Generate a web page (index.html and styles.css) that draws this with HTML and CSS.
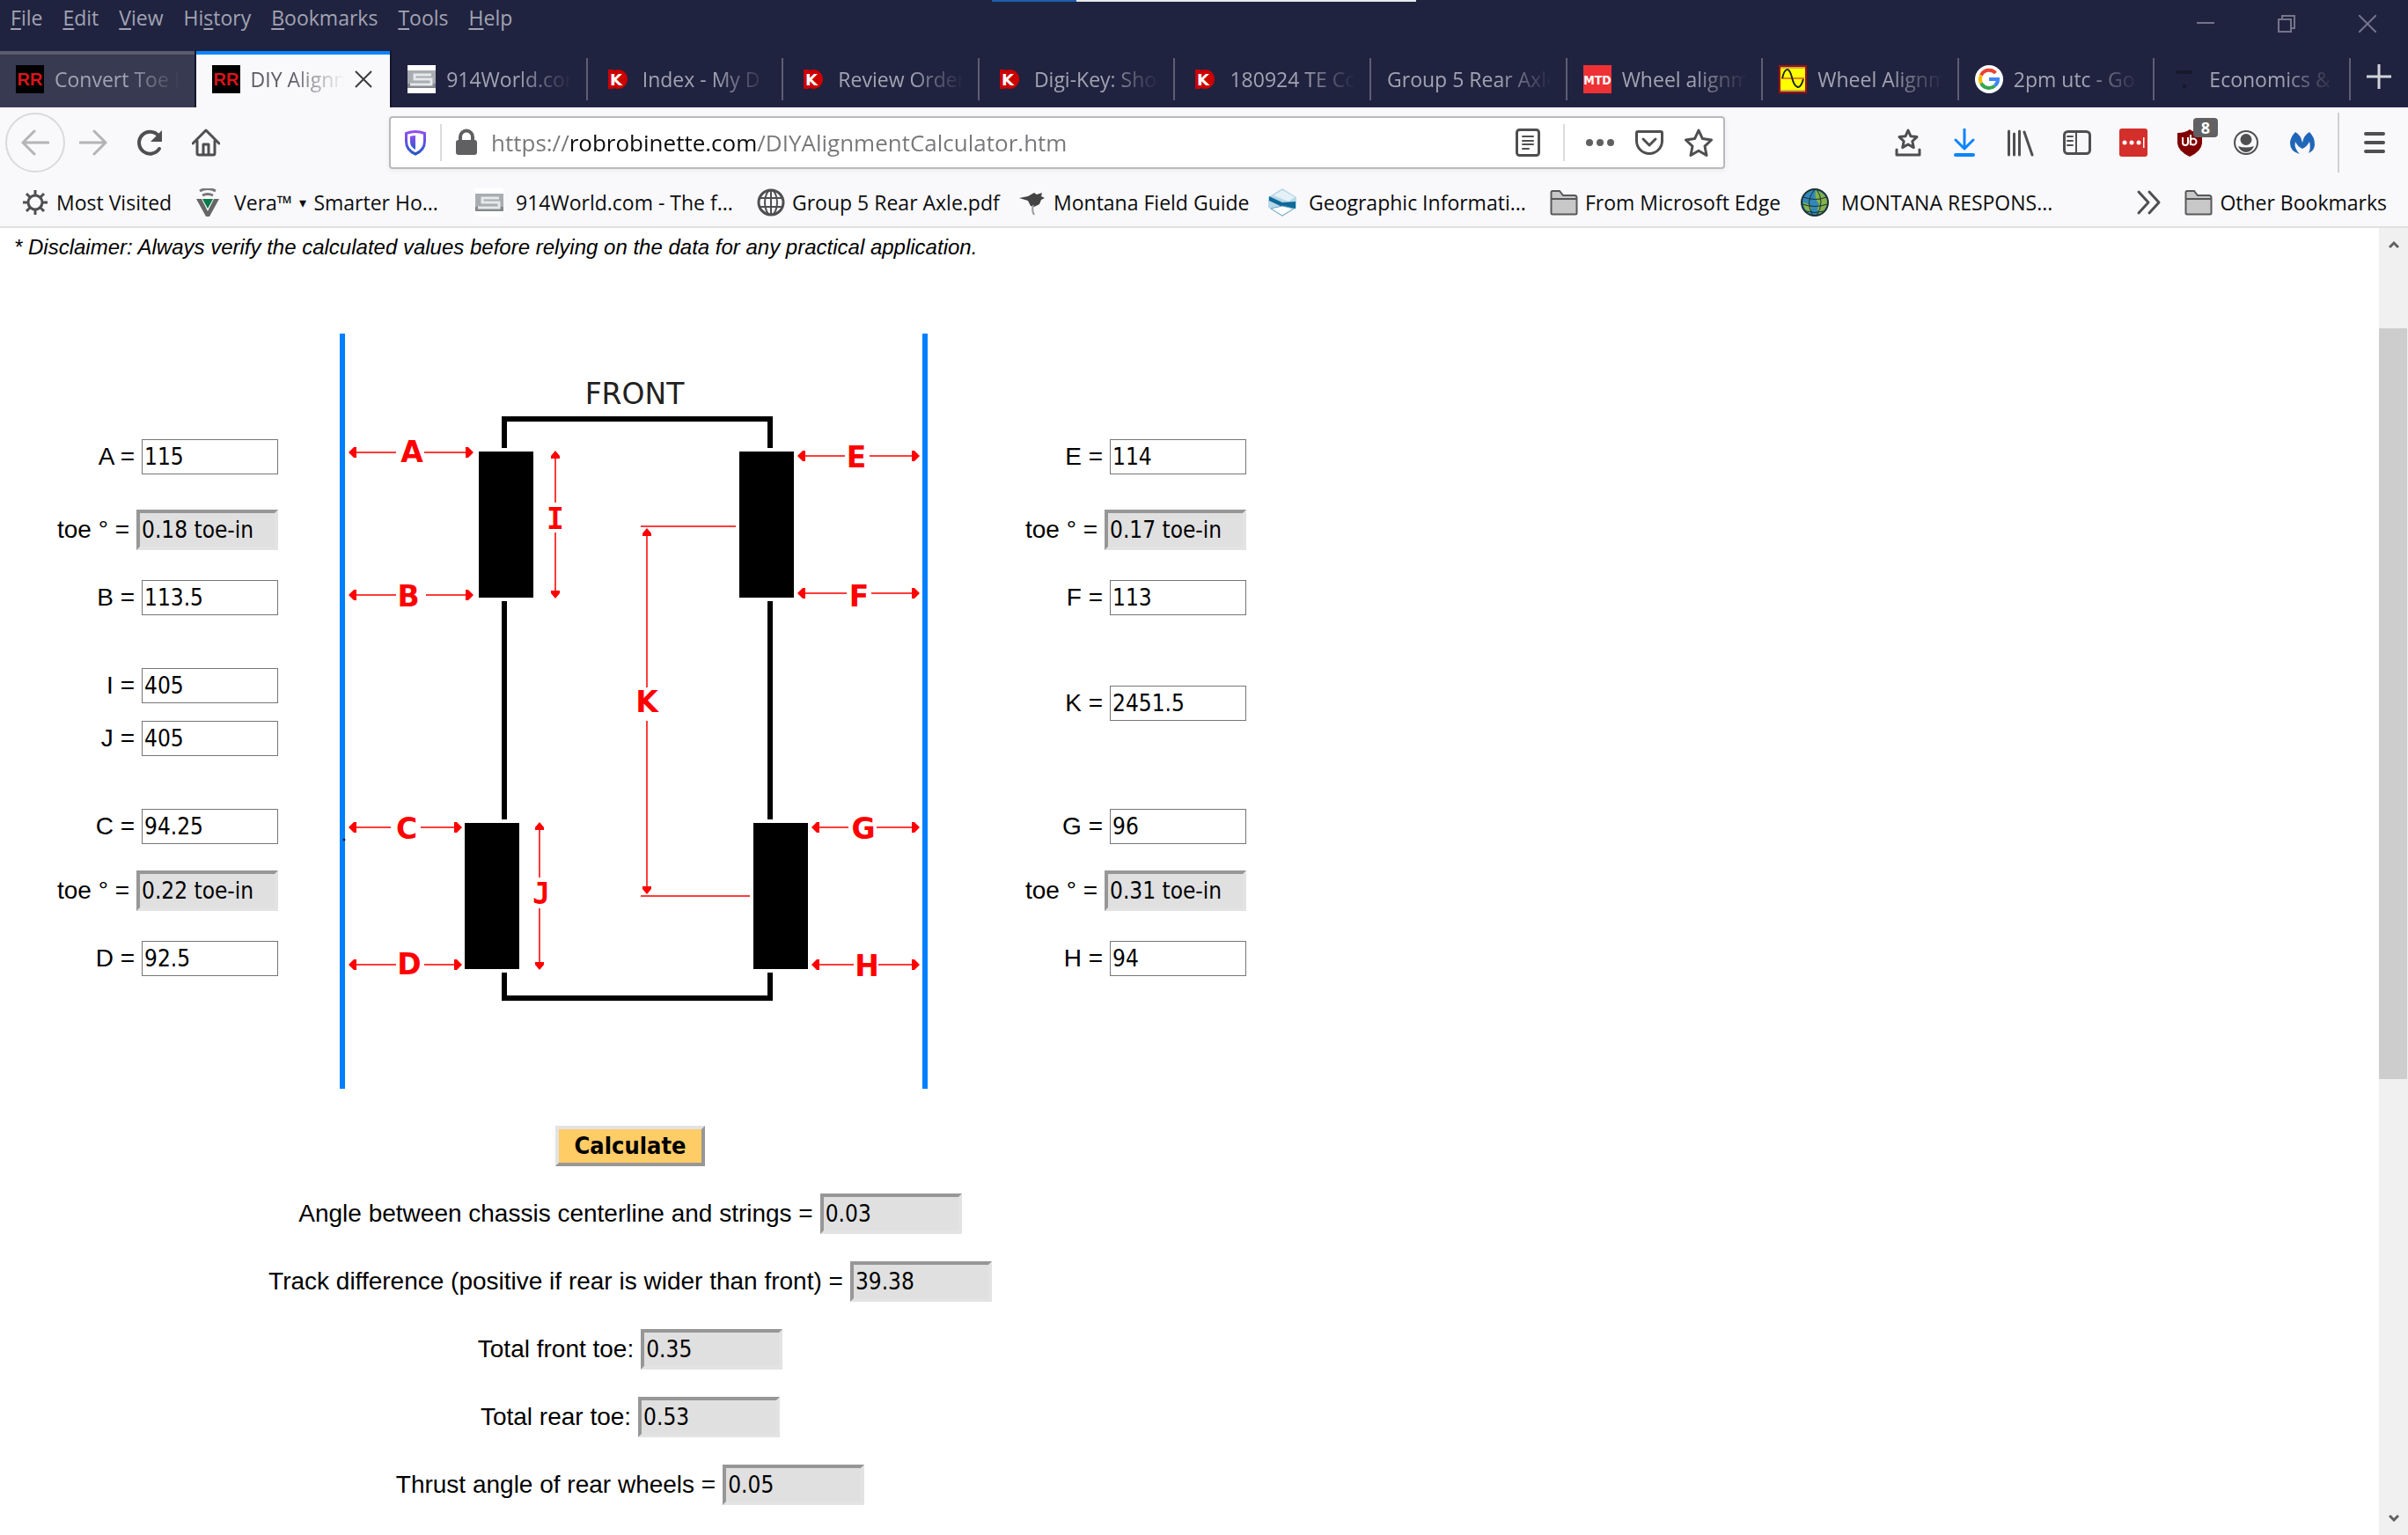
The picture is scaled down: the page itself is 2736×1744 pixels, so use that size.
FILE: index.html
```
<!DOCTYPE html>
<html lang="en">
<head>
  <meta charset="UTF-8">
  <meta name="viewport" content="width=device-width, initial-scale=1.0">
  <title>DIY Alignment Calculator</title>
  <link rel="stylesheet" href="styles.css">
</head>
<body>
  <svg class="defs" aria-hidden="true">
    <symbol id="rr" viewBox="0 0 32 32">
      <rect width="32" height="32" fill="#000"/>
      <text x="16" y="23" text-anchor="middle" font-family="Liberation Sans" font-weight="bold" font-size="20" fill="#d8141c">RR</text>
    </symbol>
    <symbol id="nine" viewBox="0 0 32 32">
      <rect width="32" height="32" fill="#fff"/>
      <path d="M0 6h32v20H0z" fill="#a9acb0"/>
      <path d="M0 21h32v5H0z" fill="#85888c"/>
      <path d="M27 11H8v5h19v6H3" fill="none" stroke="#e6e8ea" stroke-width="3"/>
    </symbol>
    <symbol id="dk" viewBox="0 0 32 32">
      <circle cx="16" cy="16" r="11" fill="#c00"/>
      <path d="M5 5h6v22H5z" fill="#c00"/>
      <text x="14" y="23" text-anchor="middle" font-family="DejaVu Sans" font-weight="bold" font-size="18" fill="#fff">K</text>
    </symbol>
    <symbol id="folder" viewBox="0 0 32 32">
      <path d="M1.500 28V4.500q0-1.500 1.500-1.500h8l4 5h13q2.500 0 2.500 2.500V28q0 1.500-1.500 1.500H3q-1.500 0-1.500-1.500z" fill="#c8c8c9" stroke="#58585a" stroke-width="2"/>
      <path d="M2 12h28" stroke="#58585a" stroke-width="2"/>
    </symbol>
    <symbol id="arrow" viewBox="0 0 9 12"><path d="M0 6l2-2 4-4h3v12H6L2 8z"/></symbol>
  </svg>

  <header class="browser">
    <div class="progress"></div>
    <div class="titlebar">
      <nav class="menu">
        <a href="#"><u>F</u>ile</a>
        <a href="#"><u>E</u>dit</a>
        <a href="#"><u>V</u>iew</a>
        <a href="#">Hi<u>s</u>tory</a>
        <a href="#"><u>B</u>ookmarks</a>
        <a href="#"><u>T</u>ools</a>
        <a href="#"><u>H</u>elp</a>
      </nav>
      <div class="window-controls">
        <button aria-label="Minimize"><svg viewBox="0 0 20 20"><path d="M0 9h20"/></svg></button>
        <button aria-label="Restore"><svg viewBox="0 0 20 20"><path d="M1 5h14v14H1zM5 5V1h14v14h-4"/></svg></button>
        <button aria-label="Close window"><svg viewBox="0 0 20 20"><path d="M0 0l20 20M20 0L0 20"/></svg></button>
      </div>
    </div>

    <div class="tabs">
      <div class="tab hover"><svg class="icon"><use href="#rr"/></svg><span>Convert Toe D</span></div>
      <div class="tab active"><svg class="icon"><use href="#rr"/></svg><span>DIY Alignm</span>
        <button class="close" aria-label="Close tab"><svg viewBox="0 0 20 20"><path d="M1 1l18 18M19 1L1 19"/></svg></button>
      </div>
      <div class="tab"><svg class="icon"><use href="#nine"/></svg><span>914World.com</span></div>
      <div class="tab"><svg class="icon"><use href="#dk"/></svg><span>Index - My D</span></div>
      <div class="tab"><svg class="icon"><use href="#dk"/></svg><span>Review Order</span></div>
      <div class="tab"><svg class="icon"><use href="#dk"/></svg><span>Digi-Key: Sho</span></div>
      <div class="tab"><svg class="icon"><use href="#dk"/></svg><span>180924 TE Co</span></div>
      <div class="tab"><span>Group 5 Rear Axle</span></div>
      <div class="tab">
        <svg class="icon" viewBox="0 0 32 32"><rect width="32" height="32" fill="#ee3135"/><text x="16" y="22" text-anchor="middle" font-family="DejaVu Sans Condensed" font-weight="bold" font-size="14" fill="#fff">MTD</text></svg>
        <span>Wheel alignm</span>
      </div>
      <div class="tab">
        <svg class="icon" viewBox="0 0 32 32"><rect x="1" y="1" width="30" height="30" fill="#ff0" stroke="#a01010" stroke-width="2"/><path d="M2 3h28M2 29h28" stroke="#c8b040" stroke-width="2"/><path d="M3 15h26" stroke="#e08020" stroke-width="2"/><path d="M4 15C7 2 12 2 15 14s9 16 13 2" fill="none" stroke="#222" stroke-width="2"/></svg>
        <span>Wheel Alignm</span>
      </div>
      <div class="tab">
        <svg class="icon" viewBox="0 0 32 32"><circle cx="16" cy="16" r="16" fill="#fff"/><g fill="none" stroke-width="4"><path d="M23.500 9A10 10 0 0 0 7 11.500" stroke="#ea4335"/><path d="M7 11.500a10 10 0 0 0 0 9" stroke="#fbbc05"/><path d="M7 20.500a10 10 0 0 0 15.500 3" stroke="#34a853"/><path d="M22.500 23.500A9.500 9.500 0 0 0 26 16h-10" stroke="#4285f4"/></g></svg>
        <span>2pm utc - Go</span>
      </div>
      <div class="tab">
        <svg class="icon" viewBox="0 0 32 32"><path d="M7 6h18v4H7zM14 22h4v4h-4z" fill="#16192e"/></svg>
        <span>Economics &amp;</span>
      </div>
      <button class="new-tab" aria-label="New tab"><svg viewBox="0 0 28 28"><path d="M14 0v28M0 14h28"/></svg></button>
    </div>

    <div class="toolbar">
      <button class="back" aria-label="Back"><svg class="icon line" viewBox="0 0 32 32"><path d="M31 16H2M15 3L2 16l13 13"/></svg></button>
      <button class="tool dim" aria-label="Forward"><svg class="icon line" viewBox="0 0 32 32"><path d="M1 16h29M17 3l13 13-13 13"/></svg></button>
      <button class="tool" aria-label="Reload"><svg class="icon line thick" viewBox="0 0 32 32"><path d="M27 23a12.500 12.500 0 1 1-1-15"/><path d="M30 2v13H17z" fill="#4f4f52" stroke="none"/></svg></button>
      <button class="tool" aria-label="Home"><svg class="icon line" viewBox="0 0 32 32"><path d="M1 17L16 2l15 15M6 14v14q0 2 2 2h16q2 0 2-2V14"/><path d="M13 29V18h6v11" /></svg></button>

      <div class="urlbar">
        <svg class="icon" viewBox="0 0 32 32"><defs><linearGradient id="shield" x2="0" y2="1"><stop offset="0" stop-color="#8f4ff0"/><stop offset="1" stop-color="#2758c8"/></linearGradient></defs><path d="M16 3.500q5 0 10.500 2v9q0 10-10.500 14.500Q5.500 24.500 5.500 14.500v-9q5.500-2 10.500-2z" fill="none" stroke="url(#shield)" stroke-width="3"/><path d="M16 8q-3 0-6 1v6q0 6 6 9z" fill="url(#shield)"/></svg>
        <i class="divider"></i>
        <svg class="icon" viewBox="0 0 32 32"><rect x="4" y="13" width="24" height="17" rx="3" fill="#606062"/><path d="M9 14V9.500a7 7 0 0 1 14 0V14" fill="none" stroke="#606062" stroke-width="4"/></svg>
        <input class="url" type="text" aria-label="Address" value="https://robrobinette.com/DIYAlignmentCalculator.htm">
        <svg class="icon line" viewBox="0 0 32 32"><rect x="3.500" y="1.500" width="25" height="29" rx="3"/><path d="M10 9h12M10 14h12M10 18h12M10 23h7" stroke-width="2"/></svg>
        <i class="divider wide"></i>
        <svg class="icon" viewBox="0 0 32 32" fill="#606062"><circle cx="4" cy="16" r="4"/><circle cx="16" cy="16" r="4"/><circle cx="28" cy="16" r="4"/></svg>
        <svg class="icon line" viewBox="0 0 32 32"><path d="M3 3.500h26q1.500 0 1.500 1.500v9a14.500 14.500 0 0 1-29 0V5q0-1.500 1.500-1.500z"/><path d="M9 12l7 7 7-7"/></svg>
        <svg class="icon line" viewBox="0 0 32 32"><path d="M16 2l4.400 9.600L30.500 13l-7.500 7.200 2 10.300-9-5.200-9 5.200 2-10.300L1.500 13l10.100-1.400z"/></svg>
      </div>

      <button class="tool" aria-label="Bookmark tools"><svg class="icon line" viewBox="0 0 32 32"><path d="M16 2l3 6.800 7 .8-5.200 4.900 1.500 7.100L16 18l-6.300 3.600 1.500-7.100L6 9.600l7-.8zM3 24v6h26v-6"/></svg></button>
      <button class="tool download" aria-label="Downloads"><svg class="icon line" viewBox="0 0 32 32"><path d="M16 1v21M6 13l10 10 10-10"/><path d="M6 30h20" stroke-width="4"/></svg></button>
      <button class="tool" aria-label="Library"><svg class="icon line" viewBox="0 0 32 32"><path d="M2.500 3v27M8.500 6v24M14.500 3v27M20 4l9 26"/></svg></button>
      <button class="tool" aria-label="Sidebar"><svg class="icon line" viewBox="0 0 32 32"><rect x="1.500" y="3.500" width="29" height="25" rx="4"/><path d="M15 4v24M5 9h6M5 14h6M5 19h6" stroke-width="2"/></svg></button>
      <button class="tool" aria-label="Passwords"><svg class="icon" viewBox="0 0 32 32"><rect width="32" height="32" rx="3" fill="#d32f2b"/><g fill="#fff"><circle cx="6" cy="16" r="2.500"/><circle cx="14" cy="16" r="2.500"/><circle cx="22" cy="16" r="2.500"/><path d="M27 10h1.500v12H27z"/></g></svg></button>
      <button class="tool" aria-label="Content blocker"><svg class="icon" viewBox="0 0 32 32"><path d="M16 1q5 4 14 4v12q-1 9-14 15Q3 26 2 17V5q9 0 14-4z" fill="#800000"/><path d="M8 10v6a3 3 0 0 0 6 0v-6M17 7v12" fill="none" stroke="#fff" stroke-width="2"/><circle cx="20" cy="15" r="3.500" fill="none" stroke="#fff" stroke-width="2"/></svg><span class="badge">8</span></button>
      <button class="tool" aria-label="Account"><svg class="icon line" viewBox="0 0 32 32"><circle cx="16" cy="16" r="13" stroke-width="2"/><g fill="#4f4f52" stroke="none"><circle cx="16" cy="12.500" r="6.500"/><path d="M7 20q9 3 18 0-3 7-9 7t-9-7z"/></g></svg></button>
      <button class="tool" aria-label="Browser guard"><svg class="icon" viewBox="0 0 32 32"><path d="M8 4q6 3 8 12Q18 7 24 4q6 6 6 14 0 7-7 10 3-6 1-13-3 6-8 8-5-2-8-8-2 7 5 14-11-3-11-12Q2 10 8 4z" fill="#2066b8"/></svg></button>
      <i class="toolbar-divider"></i>
      <button class="tool" aria-label="Menu"><svg class="icon line thick" viewBox="0 0 32 32"><path d="M6 6h20M6 16h20M6 26h20"/></svg></button>
    </div>

    <div class="bookmarks">
      <a href="#"><svg class="icon" viewBox="0 0 32 32" fill="none" stroke="#4f4f52"><circle cx="16" cy="16" r="8" stroke-width="3"/><path d="M16 2v6M16 24v6M2 16h6M24 16h6M6 6l4 4M22 22l4 4M6 26l4-4M22 10l4-4" stroke-width="3"/></svg>Most Visited</a>
      <a href="#" class="site"><svg class="icon" viewBox="0 0 32 32"><path d="M7 3q9-5 18 0M10 8q6-3 12 0" fill="none" stroke="#777" stroke-width="3"/><path d="M3 12h6l7 14 7-14h6L18 32h-4z" fill="#666"/><path d="M10 12h12l-6 11z" fill="#0b7a4b"/></svg>Vera™ <small>▾</small> Smarter Ho...</a>
      <a href="#" class="site"><svg class="icon"><use href="#nine"/></svg>914World.com - The f...</a>
      <a href="#"><svg class="icon line" viewBox="0 0 32 32"><circle cx="16" cy="16" r="14"/><g stroke-width="2"><ellipse cx="16" cy="16" rx="7" ry="14"/><path d="M16 2v28M3 11h26M3 21h26"/></g></svg>Group 5 Rear Axle.pdf</a>
      <a href="#"><svg class="icon" viewBox="0 0 32 32"><path d="M1 11l10-2 7-4 3 2 6-2-1 4 4 2-4 2-2 5-6 3-4-1-3-6z" fill="#444"/><path d="M17 19q-2 6 1 11" fill="none" stroke="#999" stroke-width="2"/></svg>Montana Field Guide</a>
      <a href="#" class="site"><svg class="icon" viewBox="0 0 32 32"><path d="M16 0l16 10v12L16 32 0 22V10z" fill="#b7d8e8"/><path d="M16 2l14 8-7 5L6 8z" fill="#e4f2f8"/><path d="M1 9l15 7 15-1v8l-13-1L1 14z" fill="#0d6a99"/><path d="M3 23l13-3 13 3-13 8z" fill="#fff" stroke="#6aa6c4"/></svg>Geographic Informati...</a>
      <a href="#"><svg class="icon"><use href="#folder"/></svg>From Microsoft Edge</a>
      <a href="#" class="site"><svg class="icon" viewBox="0 0 32 32"><circle cx="16" cy="16" r="15" fill="#3187b8" stroke="#1c3030" stroke-width="2"/><path d="M17 2q13 4 13 15-2 9-9 12-4-5 0-11-6-6-4-16zM3 16q7 1 9 6l-2 6Q3 24 3 16z" fill="#83b34a"/><path d="M3 10q14 5 26 0M2 18q14 5 28 0M6 26q10 3 20 0M16 1q-12 14-2 30M18 1q10 14 0 30" fill="none" stroke="#1c3030"/></svg>MONTANA RESPONS...</a>
      <button class="overflow" aria-label="More bookmarks"><svg class="icon line" viewBox="0 0 32 32"><path d="M4 4l11 12L4 28M16 4l11 12-11 12"/></svg></button>
      <a href="#" class="other"><svg class="icon"><use href="#folder"/></svg>Other Bookmarks</a>
    </div>
  </header>

  <div class="viewport">
    <main>
      <p class="disclaimer">* Disclaimer: Always verify the calculated values before relying on the data for any practical application.</p>

      <form class="calculator">
        <div class="measurements">
          <div class="fields left">
            <div class="field"><label for="a">A =</label><input type="text" id="a" value="115"></div>
            <div class="field"><label for="toe-lf">toe ° =</label><input type="text" id="toe-lf" class="result" value="0.18 toe-in" readonly></div>
            <div class="field"><label for="b">B =</label><input type="text" id="b" value="113.5"></div>
            <div class="field"><label for="i">I =</label><input type="text" id="i" value="405"></div>
            <div class="field"><label for="j">J =</label><input type="text" id="j" value="405"></div>
            <div class="field"><label for="c">C =</label><input type="text" id="c" value="94.25"></div>
            <div class="field"><label for="toe-lr">toe ° =</label><input type="text" id="toe-lr" class="result" value="0.22 toe-in" readonly></div>
            <div class="field"><label for="d">D =</label><input type="text" id="d" value="92.5"></div>
          </div>

          <svg class="diagram" viewBox="380 370 680 880">
            <!-- strings -->
            <path d="M389 380v858M1051 380v858" stroke="#0080ff" stroke-width="6"/>
            <circle cx="391" cy="955" r="1.500" fill="#124"/>
            <!-- chassis -->
            <g fill="none" stroke="#000" stroke-width="6">
              <path d="M573 510v-33h302v33M573 684v248M875 684v248M573 1106v29h302v-29"/>
            </g>
            <!-- wheels -->
            <path d="M544 514h62v166h-62zM840 514h62v166h-62zM528 936h62v166h-62zM856 936h62v166h-62z"/>
            <text class="front" x="721" y="460">FRONT</text>
            <!-- dimension lines -->
            <g fill="none" stroke="#ff3c3c" stroke-width="2">
              <path d="M400 515h50M482 515h52M400 677h50M484 677h50M400 941h44M478 941h43M400 1097h50M482 1097h39"/>
              <path d="M910 519h50M988 519h52M910 675h52M990 675h50M926 941h38M996 941h44M926 1097h44M998 1097h42"/>
              <path d="M631 518v54M631 606v70M613 940v58M613 1033v65M735 606v176M735 820v192"/>
              <path d="M728 599h108M728 1019h124"/>
            </g>
            <g fill="#f00">
              <use href="#arrow" x="396" y="509" width="9" height="12"/>
              <use href="#arrow" x="396" y="671" width="9" height="12"/>
              <use href="#arrow" x="396" y="935" width="9" height="12"/>
              <use href="#arrow" x="396" y="1091" width="9" height="12"/>
              <use href="#arrow" x="906" y="513" width="9" height="12"/>
              <use href="#arrow" x="906" y="669" width="9" height="12"/>
              <use href="#arrow" x="922" y="935" width="9" height="12"/>
              <use href="#arrow" x="922" y="1091" width="9" height="12"/>
              <path d="M538 515l-6 6h-3v-12h3zM538 677l-6 6h-3v-12h3zM525 941l-6 6h-3v-12h3zM525 1097l-6 6h-3v-12h3z"/>
              <path d="M1045 519l-6 6h-3v-12h3zM1045 675l-6 6h-3v-12h3zM1045 941l-6 6h-3v-12h3zM1045 1097l-6 6h-3v-12h3z"/>
              <path d="M631 513l5 6v3h-10v-3zM613 935l5 6v3h-10v-3zM735 601l5 6v3h-10v-3z"/>
              <path d="M631 681l5-6v-3h-10v3zM613 1103l5-6v-3h-10v3zM735 1017l5-6v-3h-10v3z"/>
            </g>
            <g class="dims">
              <text x="468" y="526">A</text>
              <text x="464" y="690">B</text>
              <text x="462" y="954">C</text>
              <text x="465" y="1108">D</text>
              <text x="973" y="532">E</text>
              <text x="976" y="690">F</text>
              <text x="981" y="954">G</text>
              <text x="985" y="1110">H</text>
              <text class="slab" x="631" y="602">I</text>
              <text class="slab" x="615" y="1028">J</text>
              <text x="735" y="810">K</text>
            </g>
          </svg>

          <div class="fields right">
            <div class="field"><label for="e">E =</label><input type="text" id="e" value="114"></div>
            <div class="field"><label for="toe-rf">toe ° =</label><input type="text" id="toe-rf" class="result" value="0.17 toe-in" readonly></div>
            <div class="field"><label for="f">F =</label><input type="text" id="f" value="113"></div>
            <div class="field"><label for="k">K =</label><input type="text" id="k" value="2451.5"></div>
            <div class="field"><label for="g">G =</label><input type="text" id="g" value="96"></div>
            <div class="field"><label for="toe-rr">toe ° =</label><input type="text" id="toe-rr" class="result" value="0.31 toe-in" readonly></div>
            <div class="field"><label for="h">H =</label><input type="text" id="h" value="94"></div>
          </div>
        </div>

        <div class="results">
          <button type="button" class="calculate">Calculate</button>
          <div class="field"><label for="angle">Angle between chassis centerline and strings =</label><input type="text" id="angle" class="result" value="0.03" readonly></div>
          <div class="field"><label for="track">Track difference (positive if rear is wider than front) =</label><input type="text" id="track" class="result" value="39.38" readonly></div>
          <div class="field"><label for="front">Total front toe:</label><input type="text" id="front" class="result" value="0.35" readonly></div>
          <div class="field"><label for="rear">Total rear toe:</label><input type="text" id="rear" class="result" value="0.53" readonly></div>
          <div class="field"><label for="thrust">Thrust angle of rear wheels =</label><input type="text" id="thrust" class="result" value="0.05" readonly></div>
        </div>
      </form>
    </main>

    <div class="scrollbar" aria-hidden="true">
      <svg viewBox="0 0 12 10"><path d="M1 8l5-5 5 5"/></svg>
      <div class="track"><div class="thumb"></div></div>
      <svg viewBox="0 0 12 10"><path d="M1 2l5 5 5-5"/></svg>
    </div>
  </div>
</body>
</html>
```

FILE: styles.css
```
* {
    margin: 0;
    padding: 0;
    box-sizing: border-box;
}

:root {
    --frame: #20233f;
    --frame-text: #a2a3b2;
    --toolbar: #f9f9fb;
    --icon: #4f4f52;
    --accent: #0a84ff;
    --ui-font: "Segoe UI", "Open Sans", "Noto Sans", sans-serif;
    --field-font: "DejaVu Sans Condensed", "DejaVu Sans", sans-serif;
}

body {
    display: flex;
    flex-direction: column;
    height: 100vh;
    overflow: hidden;
    background: #fff;
    color: #000;
    font-family: "Liberation Sans", Arial, sans-serif;
    font-size: 28px;
}

button {
    border: none;
    background: none;
    font: inherit;
}

a {
    color: inherit;
    text-decoration: none;
}

.defs {
    display: none;
}

.icon {
    width: 32px;
    height: 32px;
    flex: none;
    display: block;
}

.line {
    fill: none;
    stroke: var(--icon);
    stroke-width: 3;
    stroke-linecap: round;
    stroke-linejoin: round;
}

.thick {
    stroke-width: 4;
}

/* browser frame */
.browser {
    flex: none;
    font-family: var(--ui-font);
    font-size: 23px;
    background: var(--toolbar);
}

.progress {
    position: absolute;
    top: 0;
    left: 1127px;
    width: 482px;
    height: 2px;
    background: linear-gradient(to right, #1c5fb0 20%, #e8e8ec 20%);
}

.titlebar {
    display: flex;
    justify-content: space-between;
    height: 58px;
    background: var(--frame);
    color: var(--frame-text);
}

.menu {
    display: flex;
    gap: 23px;
    padding: 4px 12px;
    line-height: 32px;
}

.menu u {
    text-underline-offset: 3px;
}

.window-controls {
    display: flex;
}

.window-controls button {
    width: 92px;
    height: 56px;
}

.window-controls svg {
    width: 20px;
    height: 20px;
    fill: none;
    stroke: #74758a;
    stroke-width: 2;
}

.tabs {
    display: flex;
    height: 64px;
    background: var(--frame);
    color: var(--frame-text);
}

.tab {
    position: relative;
    flex: 1;
    min-width: 0;
    display: flex;
    align-items: center;
    gap: 12px;
    padding: 0 18px;
}

.tab span {
    flex: 1;
    overflow: hidden;
    white-space: nowrap;
    mask-image: linear-gradient(to left, transparent, #000 60px);
}

.tab::after {
    content: "";
    position: absolute;
    right: 0;
    top: 8px;
    width: 2px;
    height: 48px;
    background: #5c5e74;
}

.tab.hover,
.tab.active {
    background: #383a52;
    box-shadow: inset 0 4px #5a5b6d;
}

.tab.active {
    background: var(--toolbar);
    box-shadow: inset 0 4px var(--accent);
    color: #5b5b66;
}

.tab.hover::after,
.tab.active::after {
    top: 0;
    height: 64px;
    background: #14162b;
}

.close svg {
    display: block;
    width: 20px;
    height: 20px;
    margin-right: 4px;
    stroke: #3c3c40;
    stroke-width: 2;
}

.new-tab {
    width: 65px;
}

.new-tab svg {
    width: 28px;
    height: 28px;
    stroke: #d2d3dc;
    stroke-width: 3;
}

.toolbar {
    display: flex;
    align-items: center;
    height: 80px;
    padding: 0 6px;
}

.back,
.tool {
    display: flex;
    align-items: center;
    justify-content: center;
    flex: none;
    position: relative;
    width: 64px;
    height: 64px;
}

.back {
    width: 68px;
    height: 68px;
    border: 2px solid #dadadd;
    border-radius: 50%;
}

.back .icon,
.dim .icon {
    stroke: #b4b4b7;
}

.download .icon {
    stroke: var(--accent);
}

.badge {
    position: absolute;
    top: 4px;
    right: 0;
    width: 28px;
    height: 22px;
    border-radius: 4px;
    background: #616164;
    color: #fff;
    font-size: 18px;
    font-weight: bold;
    line-height: 22px;
}

.toolbar-divider {
    width: 2px;
    height: 68px;
    margin: 0 8px;
    background: #d0d0d2;
}

.urlbar {
    flex: 1;
    min-width: 0;
    display: flex;
    align-items: center;
    gap: 12px;
    height: 60px;
    margin: 0 176px;
    padding: 0 12px;
    border: 2px solid #b9b9bb;
    border-radius: 4px;
    background: #fff;
    box-shadow: 0 2px 6px rgba(0, 0, 0, 0.06);
}

.urlbar .icon + .icon {
    margin-left: 12px;
}

.divider {
    width: 2px;
    height: 42px;
    background: #dcdcde;
}

.divider.wide {
    margin: 0 12px;
}

/* the host name is darker than the rest of the address */
.url {
    flex: 1;
    min-width: 0;
    height: 52px;
    border: none;
    outline: none;
    font-family: var(--ui-font);
    font-size: 26px;
    background: linear-gradient(to right, #77777a 88px, #0c0c0d 88px, #0c0c0d 303px, #77777a 303px);
    -webkit-background-clip: text;
    background-clip: text;
    -webkit-text-fill-color: transparent;
}

.bookmarks {
    display: grid;
    grid-template-columns: 196px 320px 320px 297px 284px 320px 285px 320px 1fr auto;
    align-items: center;
    height: 57px;
    padding: 0 24px;
    border-bottom: 2px solid #e0e0e1;
    color: #0c0c0d;
    white-space: nowrap;
}

.bookmarks a {
    display: flex;
    align-items: center;
    gap: 8px;
}

.bookmarks .site {
    gap: 14px;
}

.bookmarks small {
    margin: 0 -6px;
    font-size: 16px;
}

.overflow {
    justify-self: end;
    margin-right: 24px;
}

/* page */
.viewport {
    flex: 1;
    min-height: 0;
    display: flex;
}

main {
    flex: 1;
    overflow: hidden;
    padding: 8px 16px;
}

.disclaimer {
    font-size: 24px;
    font-style: italic;
    line-height: 28px;
}

.calculator {
    max-width: 1400px;
    padding-top: 74px;
}

.measurements {
    display: grid;
    grid-template-columns: 300px 680px 1fr;
    column-gap: 64px;
}

.fields.right {
    margin-left: -64px;
}

.diagram {
    width: 100%;
}

.front {
    font-family: "DejaVu Sans", sans-serif;
    font-size: 33px;
    text-anchor: middle;
    fill: #222;
}

.dims {
    font-family: "DejaVu Sans", sans-serif;
    font-size: 33px;
    font-weight: bold;
    text-anchor: middle;
    fill: #f00;
}

.slab {
    font-family: "DejaVu Sans Mono", monospace;
}

.fields {
    display: grid;
    align-content: start;
    padding-top: 130px;
}

.fields.left {
    grid-template-rows: 80px 80px 100px 60px 100px 70px 80px 40px;
}

.fields.right {
    grid-template-rows: 80px 80px 120px 140px 70px 80px 40px;
}

.field {
    display: flex;
    align-items: center;
    justify-content: flex-end;
    gap: 8px;
}

.fields .field {
    align-self: start;
}

.field input {
    width: 155px;
    height: 40px;
    padding: 0 2px;
    border: 1px solid #767676;
    font-family: var(--field-font);
    font-size: 26px;
}

.field .result {
    width: 161px;
    height: 46px;
    border: 4px solid;
    border-color: #979797 #e3e3e3 #e3e3e3 #979797;
    background: #e0e0e0;
}

.results {
    display: flex;
    flex-direction: column;
    align-items: center;
    gap: 31px;
    padding-top: 30px;
}

.calculate {
    width: 170px;
    height: 46px;
    border: 4px solid;
    border-color: #e3e3e3 #979797 #979797 #e3e3e3;
    background: #fc6;
    font-family: var(--field-font);
    font-size: 27px;
    font-weight: bold;
    line-height: 38px;
}

.scrollbar {
    display: flex;
    flex-direction: column;
    align-items: center;
    width: 33px;
    background: #f0f0f0;
}

.scrollbar svg {
    width: 12px;
    height: 10px;
    margin: 14px 0;
    fill: none;
    stroke: #606060;
    stroke-width: 3;
}

.track {
    flex: 1;
    align-self: stretch;
    padding: 76px 1px 0 0;
}

.thumb {
    height: 64%;
    background: #cdcdcd;
}
```
